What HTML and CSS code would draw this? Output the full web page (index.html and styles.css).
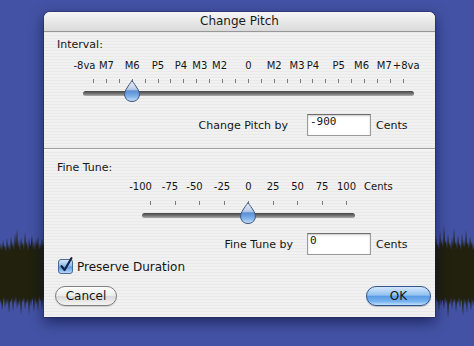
FILE: index.html
```html
<!DOCTYPE html>
<html lang="en">

<head>
    <meta charset="UTF-8">
    <title>Change Pitch</title>
    <link rel="stylesheet" href="styles.css">
</head>

<body>
    <!-- waveform of the track behind the sheet -->
    <svg class="wave" width="474" height="346" viewBox="0 0 474 346">
        <polygon points="0,250 1,243 2,251 3,240 4,248 5,245 6,252 7,238 8,249 9,244 10,251 11,236 12,247 13,242 14,250 15,233 16,246 17,229 18,248 19,240 20,251 21,237 22,246 23,242 24,250 25,232 26,246 27,241 28,251 29,238 30,247 31,243 32,235 33,249 34,241 35,250 36,239 37,246 38,236 39,250 40,243 41,248 42,238 43,247 44,242 46,246 46,296 44,303 43,297 42,309 41,299 40,302 39,296 38,311 37,300 36,305 35,297 34,312 33,301 32,298 31,306 30,299 29,314 28,298 27,304 26,300 25,310 24,297 23,303 22,299 21,315 20,298 19,306 18,300 17,309 16,296 15,304 14,299 13,311 12,297 11,303 10,300 9,313 8,298 7,305 6,299 5,308 4,297 3,302 2,310 1,299 0,304" />
        <polygon points="432,247 434,241 435,249 436,236 437,246 438,243 439,250 440,231 441,245 442,239 443,248 444,226 445,244 446,240 447,249 448,234 449,246 450,242 451,250 452,237 453,247 454,228 455,245 456,241 457,249 458,235 459,246 460,243 461,250 462,233 463,247 464,240 465,248 466,230 467,245 468,242 469,249 470,236 471,246 472,241 473,250 474,244 474,300 473,306 472,298 471,311 470,301 469,304 468,297 467,313 466,300 465,305 464,298 463,316 462,302 461,299 460,308 459,297 458,304 457,300 456,312 455,298 454,303 453,299 452,310 451,297 450,305 449,301 448,318 447,299 446,304 445,297 444,309 443,301 442,300 441,306 440,298 439,311 438,300 437,303 436,297 435,306 434,299 432,301" />
    </svg>

    <div id="dialog">
        <div id="titlebar">Change Pitch</div>

        <!-- Interval -->
        <div class="group_label">Interval:</div>
        <div class="scale_labels interval_labels">
            <ul class="marks">
                <li class="far_l">-8va</li>
                <li>M7</li>
                <li></li>
                <li>M6</li>
                <li></li>
                <li>P5</li>
                <li></li>
                <li class="nudge_l">P4</li>
                <li class="nudge_r">M3</li>
                <li></li>
                <li class="nudge_l">M2</li>
                <li></li>
                <li>0</li>
                <li></li>
                <li>M2</li>
                <li></li>
                <li class="nudge_l">M3</li>
                <li>P4</li>
                <li></li>
                <li>P5</li>
                <li></li>
                <li class="nudge_l">M6</li>
                <li></li>
                <li class="nudge_ll">M7</li>
                <li class="nudge_r">+8va</li>
            </ul>
        </div>
        <div class="slider interval_slider">
            <ul class="ticks">
                <li></li><li></li><li></li><li></li><li></li>
                <li></li><li></li><li></li><li></li><li></li>
                <li></li><li></li><li></li><li></li><li></li>
                <li></li><li></li><li></li><li></li><li></li>
                <li></li><li></li><li></li><li></li><li></li>
            </ul>
            <div class="track"></div>
            <svg class="thumb" style="left:41px" width="16" height="22" viewBox="0 0 16 22">
                <defs>
                    <linearGradient id="thumbfill" x1="0" y1="0" x2="0" y2="1">
                        <stop offset="0" stop-color="#f1f4fa" />
                        <stop offset="0.42" stop-color="#b9cbe6" />
                        <stop offset="0.5" stop-color="#5b8ed3" />
                        <stop offset="0.75" stop-color="#7db0ea" />
                        <stop offset="1" stop-color="#c9e2fb" />
                    </linearGradient>
                </defs>
                <path d="M8 0.5 C9.5 3 12 6 14 9.5 C15.5 12 15.8 14.5 15 16.8 C14 19.8 11.3 21.5 8 21.5 C4.7 21.5 2 19.8 1 16.8 C0.2 14.5 0.5 12 2 9.5 C4 6 6.5 3 8 0.5 Z" fill="url(#thumbfill)" stroke="#3f5379" />
            </svg>
        </div>
        <div class="field_row pitch_row">
            <label>Change Pitch by</label>
            <div class="field">-900</div>
            <span class="unit">Cents</span>
        </div>

        <div class="separator"></div>

        <!-- Fine Tune -->
        <div class="group_label fine_label">Fine Tune:</div>
        <div class="scale_labels fine_labels">
            <ul class="marks">
                <li class="neg wide">-100</li>
                <li class="neg">-75</li>
                <li class="neg">-50</li>
                <li class="neg small">-25</li>
                <li>0</li>
                <li>25</li>
                <li>50</li>
                <li>75</li>
                <li>100</li>
            </ul>
            <span class="scale_unit">Cents</span>
        </div>
        <div class="slider fine_slider">
            <ul class="ticks">
                <li></li><li></li><li></li><li></li><li></li>
                <li></li><li></li><li></li><li></li>
            </ul>
            <div class="track"></div>
            <svg class="thumb" style="left:98px" width="16" height="22" viewBox="0 0 16 22">
                <path d="M8 0.5 C9.5 3 12 6 14 9.5 C15.5 12 15.8 14.5 15 16.8 C14 19.8 11.3 21.5 8 21.5 C4.7 21.5 2 19.8 1 16.8 C0.2 14.5 0.5 12 2 9.5 C4 6 6.5 3 8 0.5 Z" fill="url(#thumbfill)" stroke="#3f5379" />
            </svg>
        </div>
        <div class="field_row fine_row">
            <label>Fine Tune by</label>
            <div class="field">0</div>
            <span class="unit">Cents</span>
        </div>

        <div class="check_row">
            <svg class="checkbox" width="16" height="17" viewBox="0 0 16 17">
                <defs>
                    <linearGradient id="boxfill" x1="0" y1="0" x2="0" y2="1">
                        <stop offset="0" stop-color="#dbe9fa" />
                        <stop offset="0.45" stop-color="#8fbbee" />
                        <stop offset="0.55" stop-color="#5c9be3" />
                        <stop offset="1" stop-color="#bfdcfb" />
                    </linearGradient>
                </defs>
                <rect x="0.5" y="2.5" width="14" height="14" rx="2.5" fill="url(#boxfill)" stroke="#4a6894" />
                <path d="M3.6 9.2 L6.6 13 L13.4 1.2" fill="none" stroke="#16244a" stroke-width="2.2" stroke-linecap="round" stroke-linejoin="round" />
            </svg>
            <span>Preserve Duration</span>
        </div>

        <div class="buttons">
            <div class="button cancel">Cancel</div>
            <div class="button ok">OK</div>
        </div>
    </div>
</body>

</html>
```

FILE: styles.css
```css
* {
    margin: 0;
    padding: 0;
    list-style: none;
    box-sizing: border-box;
}

html,
body {
    width: 474px;
    height: 346px;
    overflow: hidden;
}

body {
    position: relative;
    background-color: #4352a4;
    font-family: "DejaVu Sans", "Liberation Sans", sans-serif;
    color: #151515;
}

.wave {
    position: absolute;
    left: 0;
    top: 0;
}

.wave polygon {
    fill: #21210e;
}

#dialog {
    position: relative;
    width: 391px;
    height: 305px;
    margin: 12px 0 0 44px;
    border-radius: 6px 6px 0 0;
    background: repeating-linear-gradient(#f1f1f1 0, #f1f1f1 2px, #e9e9e9 2px, #e9e9e9 3px);
    box-shadow: 0 0 0 1px rgba(30, 30, 60, 0.35), 0 5px 14px rgba(5, 10, 50, 0.6);
}

#titlebar {
    height: 20px;
    line-height: 19px;
    text-align: center;
    font-size: 12px;
    color: #1a1a1a;
    border-bottom: 1px solid #979797;
    border-radius: 6px 6px 0 0;
    background: linear-gradient(#f6f6f6, #dadada);
}

.group_label {
    margin: 5px 0 0 13px;
    height: 16px;
    line-height: 16px;
    font-size: 11px;
}

.fine_label {
    margin-top: 10px;
}

/* labels over the ticks */
.scale_labels {
    display: flex;
    height: 16px;
    line-height: 16px;
    font-size: 10px;
}

.marks {
    display: flex;
    justify-content: space-between;
}

.marks li {
    flex: none;
    width: 1px;
    min-width: 0;
    display: flex;
    justify-content: center;
    white-space: nowrap;
}

.interval_labels {
    margin: 5px 0 0 49px;
}

.interval_labels .marks {
    width: 311px;
}

.fine_labels {
    margin: 3px 0 0 106px;
}

.fine_labels .marks {
    width: 197px;
}

.scale_unit {
    margin-left: 17px;
}

.far_l {
    transform: translateX(-9px);
}

.nudge_l {
    transform: translateX(-3px);
}

.nudge_ll {
    transform: translateX(-6px);
}

.nudge_r {
    transform: translateX(3px);
}

.neg {
    transform: translateX(-5px);
}

.neg.wide {
    transform: translateX(-10px);
}

.neg.small {
    transform: translateX(-2px);
}

/* sliders */
.slider {
    position: relative;
    height: 23px;
}

.interval_slider {
    margin: 5px 0 0 39px;
    width: 331px;
}

.fine_slider {
    margin: 6px 0 0 98px;
    width: 213px;
}

.ticks {
    display: flex;
    justify-content: space-between;
    height: 4px;
    margin: 0 10px;
}

.fine_slider .ticks {
    margin: 0 8px;
}

.ticks li {
    width: 1px;
    height: 4px;
    background-color: #7c7c7c;
}

.track {
    margin-top: 8px;
    height: 5px;
    border-radius: 3px;
    background: linear-gradient(#444, #7a7a7a 60%, #b0b0b0);
}

.thumb {
    position: absolute;
    top: 1px;
}

/* text fields */
.field_row {
    display: flex;
    align-items: center;
    height: 22px;
    font-size: 11px;
}

.field_row label {
    width: 263px;
    padding-right: 19px;
    text-align: right;
}

.pitch_row {
    margin-top: 12px;
}

.fine_row {
    margin-top: 9px;
}

.fine_row label {
    padding-right: 14px;
}

.field {
    width: 64px;
    height: 22px;
    padding-left: 2px;
    line-height: 13px;
    font-family: "DejaVu Sans Mono", "Liberation Mono", monospace;
    font-size: 11px;
    background-color: #fff;
    border: 1px solid #9a9a9a;
    border-top-color: #6f6f6f;
    box-shadow: inset 0 1px 2px rgba(0, 0, 0, 0.22);
}

.unit {
    margin-left: 5px;
}

.separator {
    margin-top: 12px;
    height: 2px;
    border-top: 1px solid #9c9c9c;
    background-color: #fbfbfb;
}

/* checkbox */
.check_row {
    display: flex;
    align-items: center;
    gap: 3px;
    margin: 3px 0 0 14px;
    height: 18px;
    font-size: 12px;
}

.checkbox {
    margin-top: -3px;
}

/* buttons */
.buttons {
    display: flex;
    justify-content: space-between;
    margin: 10px 4px 0 11px;
}

.button {
    height: 20px;
    line-height: 18px;
    border-radius: 10px;
    text-align: center;
    font-size: 12px;
}

.cancel {
    width: 62px;
    border: 1px solid #7e7e7e;
    background: linear-gradient(#fdfdfd, #ececec 48%, #d9d9d9 52%, #f4f4f4);
    box-shadow: 0 1px 1px rgba(0, 0, 0, 0.15);
}

.ok {
    width: 65px;
    border: 1px solid #31548c;
    background: linear-gradient(#d3e7fb, #93c1f0 45%, #5a9be4 52%, #78b3ef 80%, #bfe0fc);
    box-shadow: 0 1px 1px rgba(0, 0, 40, 0.25);
}
```
